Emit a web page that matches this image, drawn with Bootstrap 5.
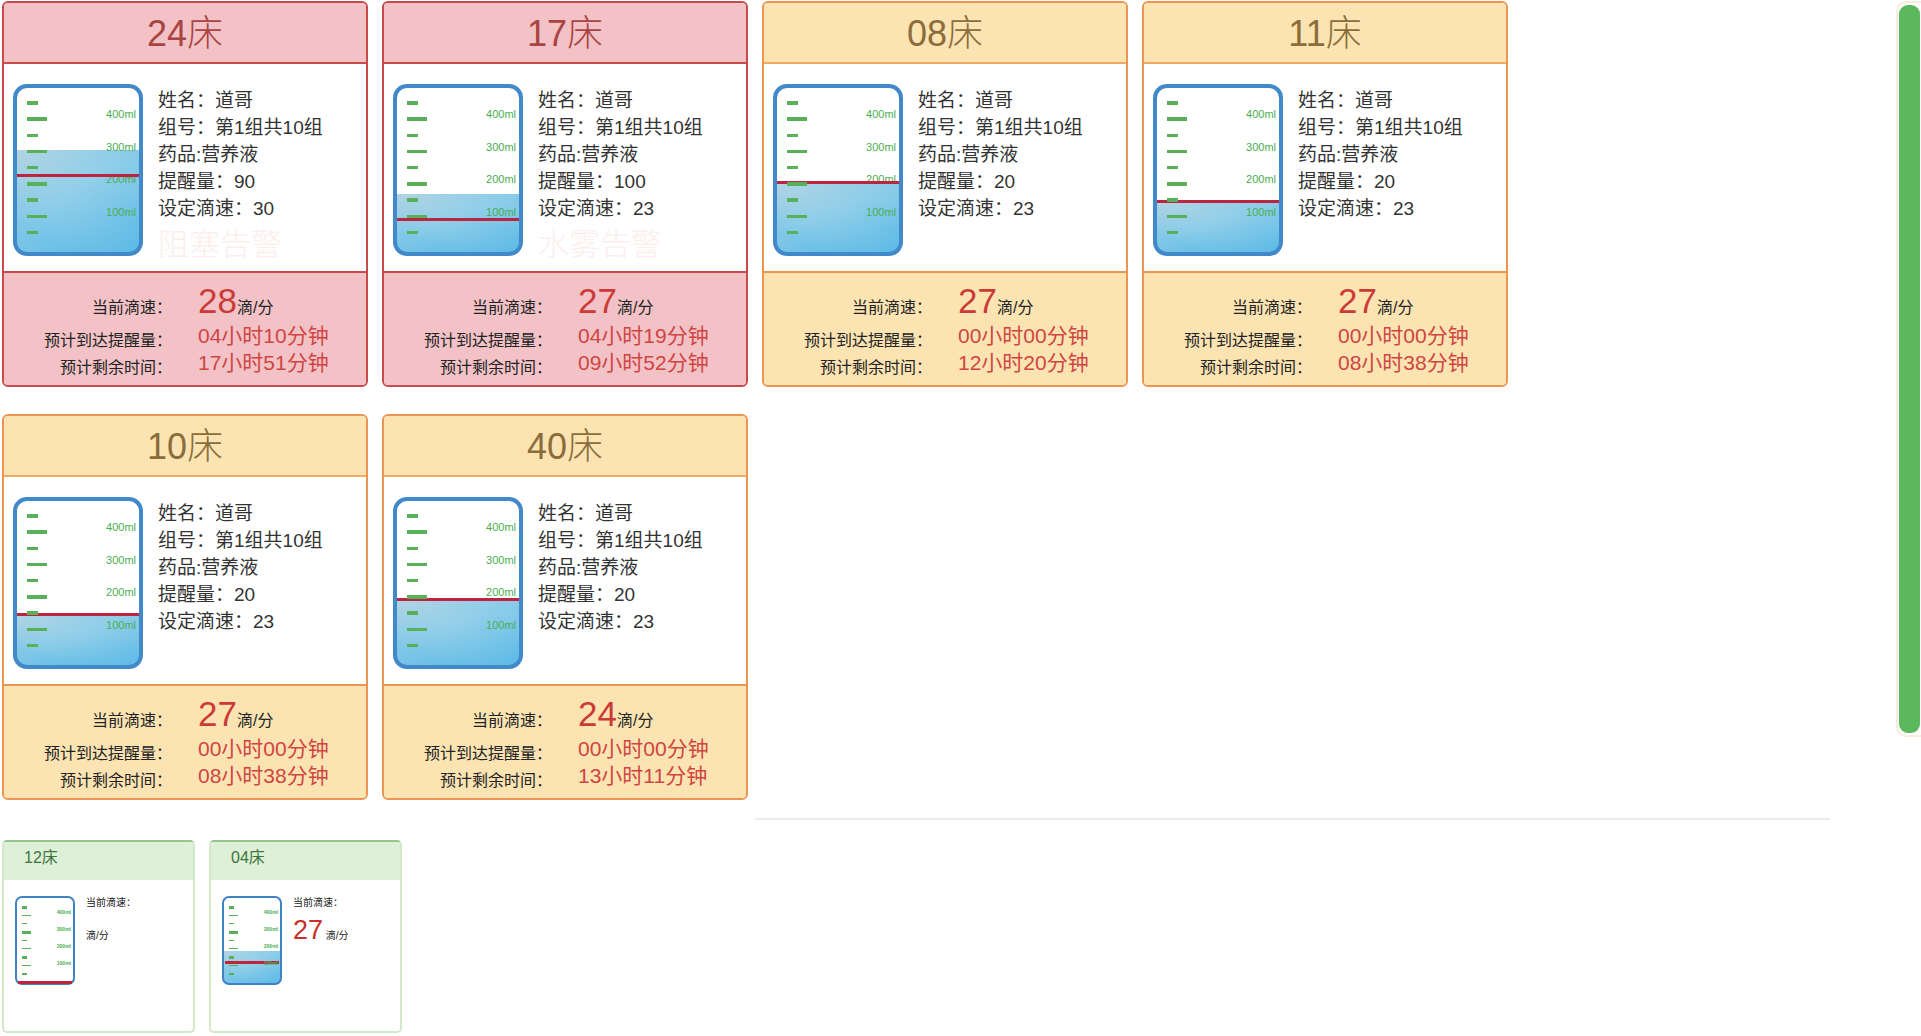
<!DOCTYPE html>
<html lang="zh-CN">
<head>
<meta charset="utf-8">
<meta name="viewport" content="width=device-width, initial-scale=1">
<title>输液监控</title>
<link href="https://cdn.jsdelivr.net/npm/bootstrap@5.3.0/dist/css/bootstrap.min.css" rel="stylesheet">
<style>
  :root { --bed-w: 366px; --bed-gap: 14px; }
  body { font-family: "Liberation Sans", "Noto Sans CJK SC", sans-serif; font-weight: 400; color: #333; background: #fff; }
  .ward { padding: 1px 0 0 2px; }
  .board { width: 1828px; max-width: 96%; }
  .bed-list { gap: 27px var(--bed-gap); }

  .bed { --line: #c84a4a; --fill: #f2c2c6; --head: #a94442; width: var(--bed-w); border: 2px solid var(--line); border-radius: 6px; overflow: hidden; }
  .bed.level-warn { --line: #eb9550; --fill: #fce4b2; --head: #8a6d3b; }
  .bed .card-header { background: var(--fill); color: var(--head); border-bottom: 2px solid var(--line); padding: 2px 0 0; border-radius: 0; font-size: 36px; line-height: 57px; font-weight: 300; }
  .bed.level-warn .card-header { border-bottom-color: #f0ac66; }
  .bed .card-body { padding: 20px 8px 4px 9px; gap: 15px; }
  .bed .card-footer { background: var(--fill); border-top: 2px solid var(--line); padding: 8px 0 4px; border-radius: 0; gap: 26px; }
  .patient { font-size: 19px; line-height: 27px; padding-top: 3px; }
  .alarm { font-size: 31px; font-weight: 300; line-height: 45px; height: 45px; color: #fdeeee; }
  .rate-labels { width: 168px; font-size: 16px; line-height: 27px; padding-top: 13px; color: #222; }
  .rate-labels div:first-child { margin-bottom: 6px; }
  .rate-values { font-size: 21px; line-height: 27px; color: #d04542; }
  .rate-now { line-height: 39px; height: 39px; margin-bottom: 2px; color: #222; font-size: 16px; }
  .rate-now strong { font-size: 35px; font-weight: 400; color: #cb3a36; }

  .divider { margin: 18px 0 20px calc(2 * var(--bed-w) + 21px); border-top: 2px solid #ebebeb; opacity: 1; }

  .mini { width: 193px; border: 2px solid #d3e8c9; border-top-color: #93c58d; border-radius: 5px; overflow: hidden; }
  .mini .card-header { background: #dff0d8; color: #3c763d; border: 0; padding: 1px 20px 7px; border-radius: 0; font-size: 16px; line-height: 30px; }
  .mini .card-body { min-height: 151px; padding: 16px 8px 8px 11px; gap: 11px; }
  .mini-rate { font-size: 10px; line-height: 14px; color: #222; }
  .mini-rate p { line-height: 40px; height: 40px; }
  .mini-rate strong { font-size: 27px; font-weight: 400; color: #c9302c; }

  .scroll-rail { width: 25px; height: 736px; border: 2px solid #faecdc; border-right: 0; border-radius: 10px 0 0 10px; padding: 2px 1px 2px 1px; }
  .scroll-rail .progress-bar { background: #5cb85c; border-radius: 9px; }
  svg text { font-family: "Liberation Sans", sans-serif; fill: #4bae4f; font-weight: 400; }
  svg .tiny { font-weight: 700; }
</style>
</head>
<body>
<svg width="0" height="0" class="position-absolute" aria-hidden="true">
  <defs>
    <linearGradient id="liquid" x1="0" y1="0" x2="0.9" y2="1">
      <stop offset="0" stop-color="#b2d4e2"/><stop offset=".45" stop-color="#93cfe9"/><stop offset="1" stop-color="#5cbae6"/>
    </linearGradient>
    <linearGradient id="sheen" x1="1" y1="0" x2="0.3" y2="0.9">
      <stop offset="0" stop-color="#7cc6e6" stop-opacity=".4"/><stop offset=".5" stop-color="#8fcfe9" stop-opacity="0"/><stop offset="1" stop-color="#4db4e4" stop-opacity=".3"/>
    </linearGradient>
  </defs>
</svg>

<div class="ward d-flex justify-content-between align-items-start">
  <main class="board d-flex flex-column">
    <section class="bed-list d-flex flex-wrap" id="beds" aria-label="重点床位"></section>
    <hr class="divider">
    <section class="bed-list d-flex flex-wrap" id="minis" aria-label="普通床位"></section>
  </main>
  <div class="scroll-rail flex-shrink-0 d-flex"><div class="progress-bar w-100"></div></div>
</div>

<script src="https://cdn.jsdelivr.net/npm/bootstrap@5.3.0/dist/js/bootstrap.bundle.min.js"></script>
<script>
  // water / mark: distance of the liquid surface and of the reminder line from the top of the bottle
  const beds = [
    { no: "24", level: "danger", water: 66, mark: 91, remind: 90, set: 30, now: 28, toRemind: "04小时10分钟", left: "17小时51分钟", alarm: "阻塞告警" },
    { no: "17", level: "danger", water: 110, mark: 135, remind: 100, set: 23, now: 27, toRemind: "04小时19分钟", left: "09小时52分钟", alarm: "水雾告警" },
    { no: "08", level: "warn", water: 98, mark: 98, remind: 20, set: 23, now: 27, toRemind: "00小时00分钟", left: "12小时20分钟", alarm: "" },
    { no: "11", level: "warn", water: 117, mark: 117, remind: 20, set: 23, now: 27, toRemind: "00小时00分钟", left: "08小时38分钟", alarm: "" },
    { no: "10", level: "warn", water: 117, mark: 117, remind: 20, set: 23, now: 27, toRemind: "00小时00分钟", left: "08小时38分钟", alarm: "" },
    { no: "40", level: "warn", water: 102, mark: 102, remind: 20, set: 23, now: 24, toRemind: "00小时00分钟", left: "13小时11分钟", alarm: "" }
  ];
  const minis = [
    { no: "12", water: 86, mark: 86, now: "" },
    { no: "04", water: 55, mark: 66, now: "27" }
  ];

  const ticks = (list, x) => list.map(([y, w, h]) => `<rect x="${x}" y="${y}" width="${w}" height="${h}" fill="#58b058"/>`).join("");
  const labels = (ys, x, size, cls) => ys.map((y, i) => `<text class="${cls}" x="${x}" y="${y}" font-size="${size}" text-anchor="end">${400 - i * 100}ml</text>`).join("");

  const bottle = b => `
    <svg class="flex-shrink-0" width="130" height="172" viewBox="0 0 130 172">
      <path d="M3 ${b.water}H127V162L120 169H10L3 162Z" fill="url(#liquid)"/>
      <path d="M3 ${b.water}H127V162L120 169H10L3 162Z" fill="url(#sheen)"/>
      ${labels([34, 67, 99, 132], 123, 11, "scale")}
      <rect x="3" y="${b.mark - 1}" width="124" height="3" fill="#bd2440"/>
      ${ticks([[17,11,4],[33,20,4],[50,11,3],[66,20,3],[82,11,3],[98,20,4],[114,11,4],[131,20,3],[147,11,3]], 14)}
      <rect x="2" y="2" width="126" height="168" rx="12" fill="none" stroke="#4289ca" stroke-width="4"/>
    </svg>`;

  const miniBottle = b => `
    <svg class="flex-shrink-0" width="60" height="89" viewBox="0 0 60 89">
      <path d="M1 ${b.water}H59V84L56 88H4L1 84Z" fill="url(#liquid)"/>
      <path d="M1 ${b.water}H59V84L56 88H4L1 84Z" fill="url(#sheen)"/>
      <rect x="1" y="1" width="58" height="87" rx="6" fill="none" stroke="#3f83c4" stroke-width="2"/>
      <rect x="3" y="${b.mark - 1}" width="54" height="3" fill="#c0243c"/>
      ${labels([18, 35, 52, 69], 56, 5, "tiny")}
      ${ticks([[10,5,3],[19,9,1],[27,5,1],[35,9,3],[44,5,1],[52,9,1],[60,5,3],[69,9,1],[77,5,2]], 7)}
    </svg>`;

  document.getElementById("beds").innerHTML = beds.map(b => `
    <article class="card bed level-${b.level}">
      <div class="card-header text-center">${b.no}床</div>
      <div class="card-body d-flex align-items-start">
        ${bottle(b)}
        <div class="patient text-nowrap">
          <div>姓名：道哥</div>
          <div>组号：第1组共10组</div>
          <div>药品:营养液</div>
          <div>提醒量：${b.remind}</div>
          <div>设定滴速：${b.set}</div>
          <div class="alarm">${b.alarm}</div>
        </div>
      </div>
      <div class="card-footer d-flex align-items-start text-nowrap">
        <div class="rate-labels text-end"><div>当前滴速：</div><div>预计到达提醒量：</div><div>预计剩余时间：</div></div>
        <div class="rate-values"><div class="rate-now"><strong>${b.now}</strong>滴/分</div><div>${b.toRemind}</div><div>${b.left}</div></div>
      </div>
    </article>`).join("");

  document.getElementById("minis").innerHTML = minis.map(b => `
    <article class="card mini">
      <div class="card-header">${b.no}床</div>
      <div class="card-body d-flex align-items-start">
        ${miniBottle(b)}
        <div class="mini-rate text-nowrap">
          <div>当前滴速：</div>
          <p class="mb-0"><strong>${b.now}</strong>${b.now ? " " : ""}滴/分</p>
        </div>
      </div>
    </article>`).join("");
</script>
</body>
</html>
